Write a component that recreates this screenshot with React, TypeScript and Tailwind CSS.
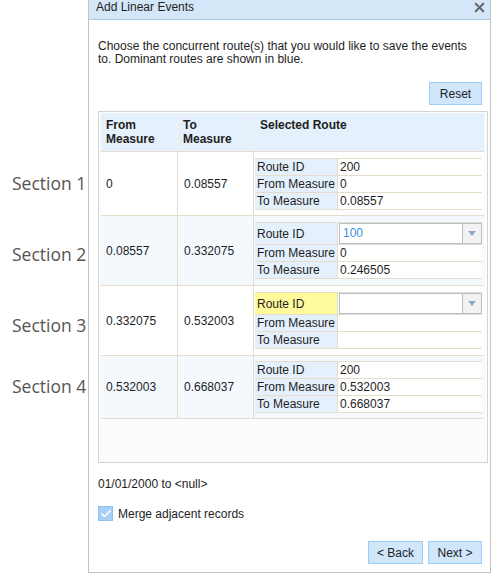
import { Check, X } from 'lucide-react'

type RouteRow = {
  from: string
  to: string
  routeId: string
  routeFrom: string
  routeTo: string
  dropdown?: boolean
  dominant?: boolean
  missing?: boolean
}

const ROWS: RouteRow[] = [
  { from: '0', to: '0.08557', routeId: '200', routeFrom: '0', routeTo: '0.08557' },
  { from: '0.08557', to: '0.332075', routeId: '100', routeFrom: '0', routeTo: '0.246505', dropdown: true, dominant: true },
  { from: '0.332075', to: '0.532003', routeId: '', routeFrom: '', routeTo: '', dropdown: true, missing: true },
  { from: '0.532003', to: '0.668037', routeId: '200', routeFrom: '0.532003', routeTo: '0.668037' },
]

// row heights line up with the section labels on the left
const ROW_H = ['h-[64px]', 'h-[70px]', 'h-[70px]', 'h-[64px]']

function RouteSelect({ value, dominant }: { value: string; dominant?: boolean }) {
  return (
    <div className="flex h-[21px] flex-1 border border-[#b7bfcb] bg-white">
      <span className={`flex-1 pl-[3px] leading-[19px] ${dominant ? 'text-[#3b8fe0]' : ''}`}>{value}</span>
      <span className="flex w-[19px] items-center justify-center border-l border-[#b7bfcb] bg-[#f2f2f2]">
        <svg width="8" height="5" viewBox="0 0 8 5">
          <path d="M0 0h8L4 5z" fill="#8fa3c6" />
        </svg>
      </span>
    </div>
  )
}

function RouteDetail({ row }: { row: RouteRow }) {
  const line = 'flex border-b border-[#e6dccb]'
  const label = 'w-[83px] shrink-0 border-r border-[#e6dccb] bg-[#e4f0fb] pl-[2px]'
  return (
    <div className="w-full border-t border-[#e6dccb] bg-white">
      <div className={`${line} ${row.dropdown ? 'h-[22px]' : 'h-[17px]'}`}>
        <div className={`${label} flex items-center ${row.missing ? 'bg-[#fffa9c]' : ''}`}>Route ID</div>
        {row.dropdown ? (
          <div className="flex flex-1 items-center pl-px">
            <RouteSelect value={row.routeId} dominant={row.dominant} />
          </div>
        ) : (
          <div className="flex flex-1 items-center pl-[2px]">{row.routeId}</div>
        )}
      </div>
      <div className={`${line} h-[17px]`}>
        <div className={`${label} flex items-center`}>From Measure</div>
        <div className="flex flex-1 items-center pl-[2px]">{row.routeFrom}</div>
      </div>
      <div className={`${line} h-[17px]`}>
        <div className={`${label} flex items-center`}>To Measure</div>
        <div className="flex flex-1 items-center pl-[2px]">{row.routeTo}</div>
      </div>
    </div>
  )
}

function BlueButton({ children, w }: { children: React.ReactNode; w: string }) {
  return (
    <button className={`h-[23px] ${w} border border-[#9dcdf5] bg-[#cfe6fb] text-[12px] text-[#222]`}>{children}</button>
  )
}

export default function App() {
  return (
    <div className="flex h-[573px] w-[491px] bg-white font-['Liberation_Sans',Arial,sans-serif] text-[12px] text-[#1e1e1e]">
      {/* section labels */}
      <div className="w-[88px] shrink-0 whitespace-nowrap pl-[12px] font-['Open_Sans',sans-serif] text-[17.5px] text-[#555]">
        <div className="mt-[171px] leading-[24px]">Section 1</div>
        <div className="mt-[47px] leading-[24px]">Section 2</div>
        <div className="mt-[47px] leading-[24px]">Section 3</div>
        <div className="mt-[37px] leading-[24px]">Section 4</div>
      </div>

      {/* dialog */}
      <div className="flex w-[403px] shrink-0 flex-col border-x border-b border-[#c2c2c2]">
        <div className="flex h-[20px] items-start justify-between border-b border-[#a7cbec] bg-[#d3e7f9] pl-[7px] pr-[3px]">
          <span className="pt-[1px] leading-[13px]">Add Linear Events</span>
          <X size={15} strokeWidth={3.4} className="text-[#6a6a6a]" />
        </div>

        <div className="flex flex-1 flex-col pl-[9px] pr-[2px]">
          <p className="mt-[20px] pr-[6px] leading-[13px]">
            Choose the concurrent route(s) that you would like to save the events to. Dominant routes are shown in blue.
          </p>

          <div className="mt-[16px] flex justify-end pr-[6px]">
            <BlueButton w="w-[53px]">Reset</BlueButton>
          </div>

          {/* route table */}
          <div className="mt-[6px] h-[352px] border border-[#d4d4d4] bg-[#fcfcfc] pl-[2px] pr-[3px] pt-px">
            <div className="flex h-[38px] bg-[#e4f0fb] font-bold leading-[14px]">
              <div className="w-[77px] border-r border-[#f7f3ec] pl-[5px] pt-[5px]">From<br />Measure</div>
              <div className="w-[76px] border-r border-[#f7f3ec] pl-[5px] pt-[5px]">To<br />Measure</div>
              <div className="flex-1 pl-[6px] pt-[5px]">Selected Route</div>
            </div>
            {ROWS.map((row, i) => (
              <div
                key={i}
                className={`flex ${ROW_H[i]} border-t border-[#e6dccb] ${i === 3 ? 'border-b' : ''} ${i % 2 ? 'bg-[#f4f9fe]' : 'bg-white'}`}
              >
                <div className="flex w-[77px] items-center border-r border-[#e6dccb] pl-[5px]">{row.from}</div>
                <div className="flex w-[76px] items-center border-r border-[#e6dccb] pl-[6px]">{row.to}</div>
                <div className="flex flex-1 items-center pl-px pr-[2px]">
                  <RouteDetail row={row} />
                </div>
              </div>
            ))}
          </div>

          <div className="mt-[14px] leading-[14px]">01/01/2000 to &lt;null&gt;</div>

          <label className="mt-[15px] flex items-center gap-[5px]">
            <span className="flex h-[15px] w-[15px] items-center justify-center border border-[#8fc1ee] bg-[#a6d0f6]">
              <Check size={12} strokeWidth={3.5} className="text-white" />
            </span>
            <span className="leading-[14px]">Merge adjacent records</span>
          </label>

          <div className="mt-[20px] flex justify-end gap-[5px] pr-[6px]">
            <BlueButton w="w-[55px]">&lt; Back</BlueButton>
            <BlueButton w="w-[54px]">Next &gt;</BlueButton>
          </div>
        </div>
      </div>
    </div>
  )
}
